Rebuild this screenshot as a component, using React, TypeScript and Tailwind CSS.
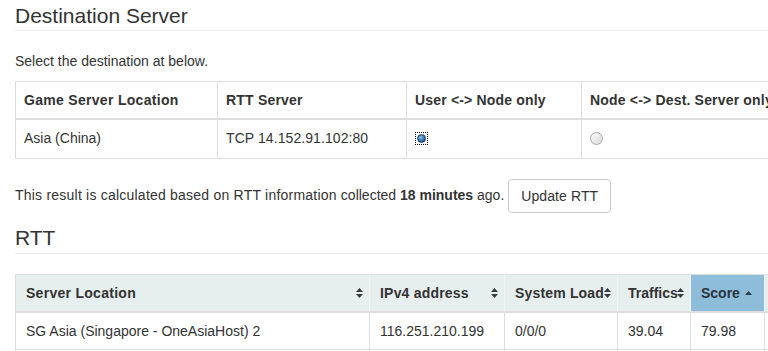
const DEST_COLS = [
  { label: 'Game Server Location', w: 'w-[203px]', track: 'tracking-[0.3px]' },
  { label: 'RTT Server', w: 'w-[189px]', track: 'tracking-[0.2px]' },
  { label: 'User <-> Node only', w: 'w-[175px]', track: 'tracking-[0.18px]' },
  { label: 'Node <-> Dest. Server only', w: 'w-[220px]', track: 'tracking-[0.18px]' },
];

type RttCol = { label: string; w: string; track: string; sort: 'both' | 'asc' | 'none'; active?: boolean };

const RTT_COLS: RttCol[] = [
  { label: 'Server Location', w: 'w-[355px]', track: 'tracking-[0.28px]', sort: 'both' },
  { label: 'IPv4 address', w: 'w-[135px]', track: 'tracking-[0.2px]', sort: 'both' },
  { label: 'System Load', w: 'w-[113px]', track: 'tracking-[0.17px]', sort: 'both' },
  { label: 'Traffics', w: 'w-[73px]', track: '', sort: 'both' },
  { label: 'Score', w: 'w-[74px]', track: '', sort: 'asc', active: true },
  { label: '', w: 'w-[100px]', track: '', sort: 'none' },
];

const RTT_ROWS = [
  ['SG Asia (Singapore - OneAsiaHost) 2', '116.251.210.199', '0/0/0', '39.04', '79.98', ''],
  ['', '', '', '', '', ''],
];

function SortBoth() {
  return (
    <svg width="7" height="10" viewBox="0 0 7 10" className="absolute right-[6px] top-1/2 -translate-y-1/2">
      <path d="M0 4 L3.5 0 L7 4 Z" fill="#3a3a3a" />
      <path d="M0 6 L7 6 L3.5 10 Z" fill="#3a3a3a" />
    </svg>
  );
}

function SortAsc() {
  return (
    <svg width="7" height="4" viewBox="0 0 7 4" className="absolute right-[12px] top-1/2 -translate-y-1/2">
      <path d="M0 4 L3.5 0 L7 4 Z" fill="#2a3a48" />
    </svg>
  );
}

function Radio({ checked }: { checked: boolean }) {
  if (checked) {
    return (
      <span className="mt-[5px] ml-[1px] flex h-[11px] w-[11px] items-center justify-center outline-1 outline-dotted outline-black">
        <span className="block h-[9px] w-[9px] rounded-full border border-[#1d3b58] bg-[radial-gradient(circle_at_40%_35%,#8cc4ee,#2a6aa6_60%,#17426b)]" />
      </span>
    );
  }
  return (
    <span className="mt-1 block h-[13px] w-[13px] rounded-full border border-[#a8a8a8] bg-[linear-gradient(135deg,#fbfbfb,#d9d9d9)]" />
  );
}

export default function App() {
  return (
    <div className="h-[351px] w-[768px] overflow-hidden bg-white pl-[15px] font-['Liberation_Sans',Arial,sans-serif] text-[14px] leading-5 text-[#333]">
      {/* Destination Server */}
      <h3 className="border-b border-[#eee] pt-1 pb-[3px] text-[21px] leading-[23px] font-normal">Destination Server</h3>
      <p className="mt-5 mb-[10px]">Select the destination at below.</p>

      <table className="mb-5 table-fixed border-separate border-spacing-0 w-[787px]">
        <thead>
          <tr>
            {DEST_COLS.map((c, i) => (
              <th
                key={c.label}
                className={`${c.w} ${c.track} h-[39px] whitespace-nowrap border-t border-r border-b-2 border-[#ddd] px-2 text-left align-middle font-bold ${i === 0 ? 'border-l' : ''}`}
              >
                {c.label}
              </th>
            ))}
          </tr>
        </thead>
        <tbody>
          <tr>
            <td className="h-[39px] border-l border-r border-b border-[#ddd] px-2 pt-2 align-top">Asia (China)</td>
            <td className="h-[39px] border-r border-b border-[#ddd] px-2 pt-2 align-top tracking-[0.08px]">TCP 14.152.91.102:80</td>
            <td className="h-[39px] border-r border-b border-[#ddd] px-2 pt-2 align-top">
              <Radio checked />
            </td>
            <td className="h-[39px] border-r border-b border-[#ddd] px-2 pt-2 align-top">
              <Radio checked={false} />
            </td>
          </tr>
        </tbody>
      </table>

      <p className="mb-[10px]">
        <span className="tracking-[0.22px]">This result is calculated based on RTT information </span>
        collected <b>18 minutes</b> ago.{' '}
        <button className="h-[34px] rounded border border-[#ccc] bg-white px-3 align-middle text-[14px] leading-5 text-[#333] tracking-[0.1px]">
          Update RTT
        </button>
      </p>

      {/* RTT */}
      <h3 className="mt-[13px] border-b border-[#eee] pb-1 text-[21px] leading-[23px] font-normal">RTT</h3>

      <table className="mt-5 table-fixed border-separate border-spacing-0 w-[850px]">
        <thead>
          <tr>
            {RTT_COLS.map((c, i) => (
              <th
                key={i}
                className={`${c.w} ${c.track} relative h-[39px] whitespace-nowrap border-t border-r border-b-2 border-t-[#ddd] border-r-[#f3f3f3] border-b-[#ddd] px-[10px] text-left align-middle font-bold ${
                  c.active ? 'bg-[#8dbdd8] text-[#2b3440]' : 'bg-[#e6eeee]'
                } ${i === 0 ? 'border-l border-l-[#ddd]' : ''}`}
              >
                {c.label}
                {c.sort === 'both' && <SortBoth />}
                {c.sort === 'asc' && <SortAsc />}
              </th>
            ))}
          </tr>
        </thead>
        <tbody>
          {RTT_ROWS.map((row, r) => (
            <tr key={r}>
              {row.map((v, i) => (
                <td
                  key={i}
                  className={`h-[37px] whitespace-nowrap border-r border-b border-[#ddd] px-[10px] align-middle ${i === 0 ? 'border-l' : ''}`}
                >
                  {v}
                </td>
              ))}
            </tr>
          ))}
        </tbody>
      </table>
    </div>
  );
}
